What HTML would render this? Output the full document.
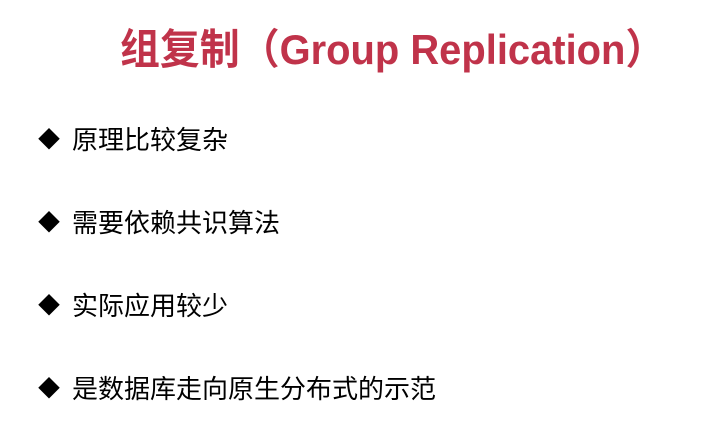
<!DOCTYPE html>
<html><head><meta charset="utf-8"><style>
body{margin:0;width:705px;height:425px;background:#fff;position:relative;overflow:hidden;font-family:"Liberation Sans","Noto Sans CJK SC",sans-serif}
.t{position:absolute;left:120px;top:24px;font-size:42px;font-weight:bold;color:#c0334a;white-space:nowrap;line-height:52px;transform:scaleX(0.95);transform-origin:0 0}
.b{position:absolute;left:38px;font-size:26px;color:#000;white-space:nowrap;line-height:32px}
.b span{display:inline-block;width:34px;font-size:22px;vertical-align:top}
</style></head><body>
<div class="t">组复制（Group Replication）</div>
<div class="b" style="top:124px"><span>◆</span>原理比较复杂</div>
<div class="b" style="top:207px"><span>◆</span>需要依赖共识算法</div>
<div class="b" style="top:290px"><span>◆</span>实际应用较少</div>
<div class="b" style="top:373px"><span>◆</span>是数据库走向原生分布式的示范</div>
</body></html>
